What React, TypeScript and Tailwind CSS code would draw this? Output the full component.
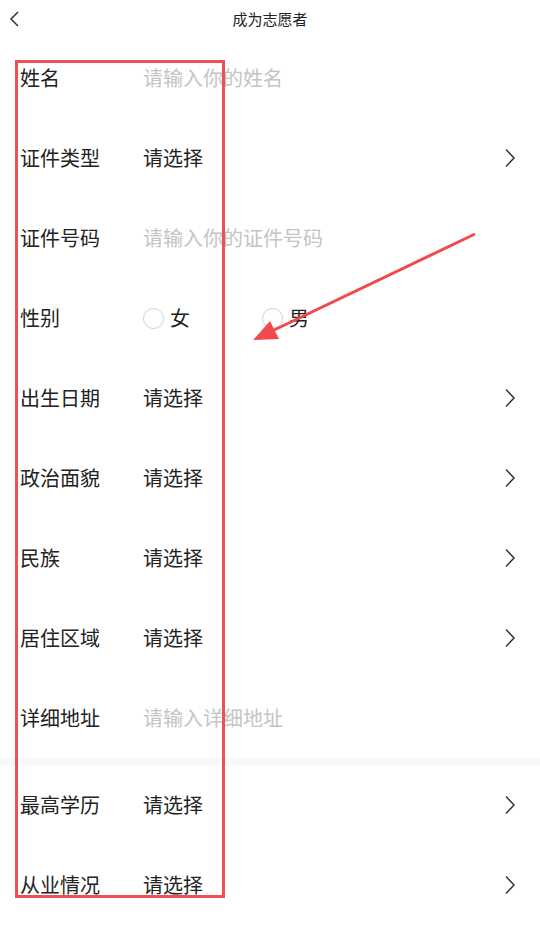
const font = { fontFamily: '"Noto Sans CJK SC", "Noto Sans", sans-serif' };

type Field = {
  label: string;
  kind: 'input' | 'select' | 'radio';
  placeholder?: string;
};

const groupA: Field[] = [
  { label: '姓名', kind: 'input', placeholder: '请输入你的姓名' },
  { label: '证件类型', kind: 'select' },
  { label: '证件号码', kind: 'input', placeholder: '请输入你的证件号码' },
  { label: '性别', kind: 'radio' },
  { label: '出生日期', kind: 'select' },
  { label: '政治面貌', kind: 'select' },
  { label: '民族', kind: 'select' },
  { label: '居住区域', kind: 'select' },
  { label: '详细地址', kind: 'input', placeholder: '请输入详细地址' },
];

const groupB: Field[] = [
  { label: '最高学历', kind: 'select' },
  { label: '从业情况', kind: 'select' },
];

function Chevron() {
  return (
    <svg width="12" height="20" viewBox="0 0 12 20" fill="none" className="shrink-0">
      <path d="M2 1.5 L10 10 L2 18.5" stroke="#333" strokeWidth="1.5" />
    </svg>
  );
}

function Radio({ label }: { label: string }) {
  return (
    <div className="flex items-center gap-[6px]">
      <span className="w-[21px] h-[21px] rounded-full border border-[#d0d0d0] bg-white" />
      <span className="text-[20px] text-[#222]">{label}</span>
    </div>
  );
}

function Row({ field }: { field: Field }) {
  return (
    <div className="h-[80px] flex items-center pl-[20px] pr-[24px]">
      <div className="w-[123px] text-[20px] text-[#222]">{field.label}</div>
      <div className="flex-1 flex items-center">
        {field.kind === 'input' && (
          <span className="text-[20px] text-[#c4c4c4]">{field.placeholder}</span>
        )}
        {field.kind === 'select' && <span className="text-[20px] text-[#222]">请选择</span>}
        {field.kind === 'radio' && (
          <div className="flex items-center gap-[72px]">
            <Radio label="女" />
            <Radio label="男" />
          </div>
        )}
      </div>
      {field.kind === 'select' && <Chevron />}
    </div>
  );
}

export default function App() {
  return (
    <div className="relative w-[540px] h-[948px] bg-white overflow-hidden" style={font}>
      {/* Header */}
      <div className="h-[38px] flex items-center px-[8px]">
        <svg width="12" height="16" viewBox="0 0 12 16" fill="none" className="shrink-0">
          <path d="M10 1 L3 8 L10 15" stroke="#333" strokeWidth="1.5" />
        </svg>
        <div className="flex-1 text-center text-[15px] text-[#222] pr-[12px]">成为志愿者</div>
      </div>

      {/* Form */}
      <div>
        {groupA.map((f) => (
          <Row key={f.label} field={f} />
        ))}
      </div>
      <div className="h-[7px] bg-[#f8f8f8]" />
      <div>
        {groupB.map((f) => (
          <Row key={f.label} field={f} />
        ))}
      </div>

      {/* Annotation overlay */}
      <div className="absolute left-[15px] top-[60px] w-[210px] h-[838px] border-[3px] border-[#ee4f55] pointer-events-none" />
      <svg className="absolute left-0 top-0 pointer-events-none" width="540" height="948">
        <line x1="475" y1="234" x2="270" y2="332" stroke="#f04a4d" strokeWidth="3" />
        <polygon points="253,340 279,339 270,321" fill="#f04a4d" />
      </svg>
    </div>
  );
}
